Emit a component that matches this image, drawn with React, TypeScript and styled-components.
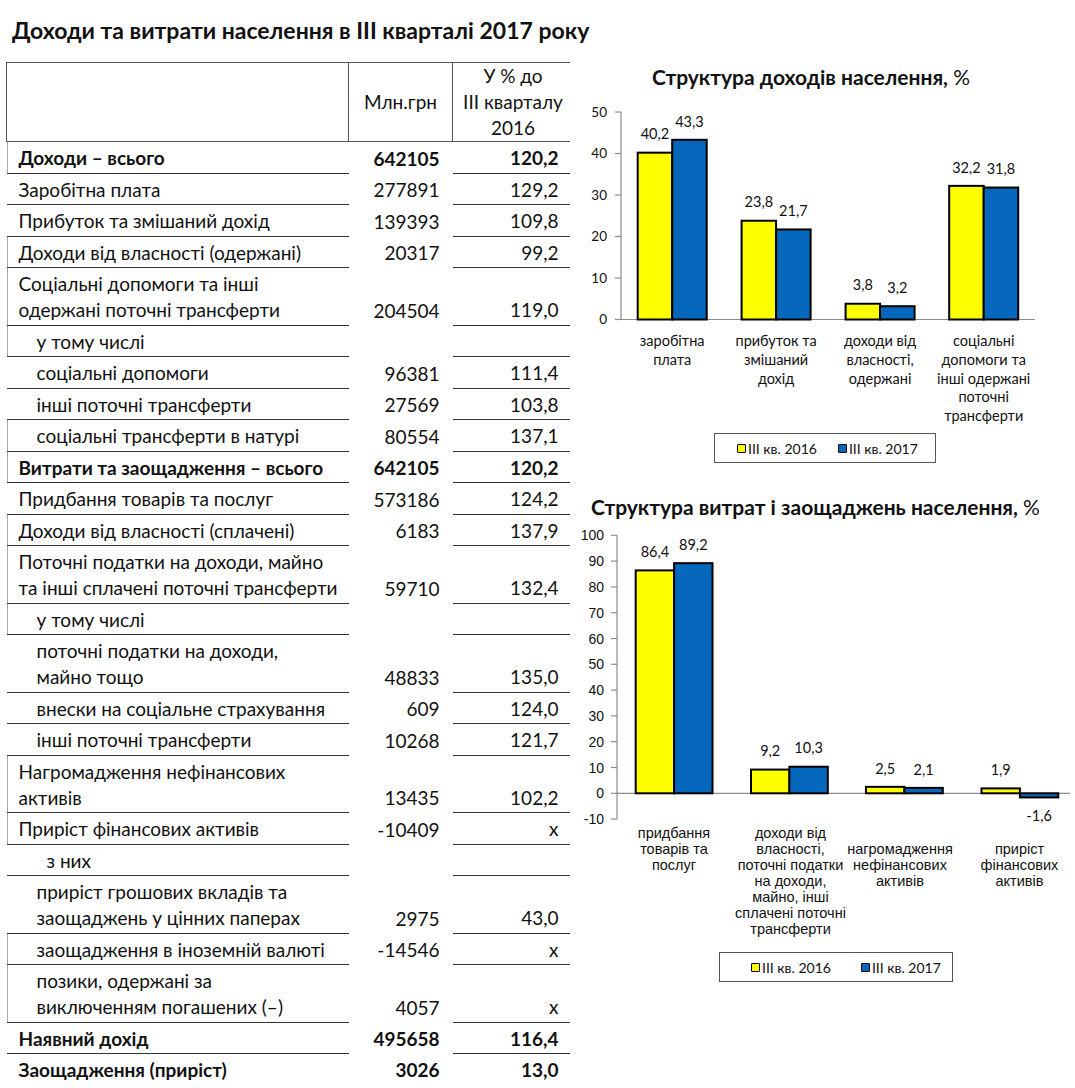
import React from "react";
import styled, { createGlobalStyle } from "styled-components";

const SANS = `Lato, "Open Sans", "Noto Sans", sans-serif`;
const ARIAL = `"Liberation Sans", Arial, sans-serif`;
const YELLOW = "#ffff00";
const BLUE = "#0568bd";
const INK = "#111";

const GlobalStyle = createGlobalStyle`
  html, body { margin: 0; padding: 0; background: #fff; }
  body { font-family: ${SANS}; color: ${INK}; }
`;

const Page = styled.div`
  width: 1075px;
  display: flex;
  flex-direction: column;
`;

const Title = styled.h1`
  margin: 0 0 20px 0;
  padding: 18px 0 0 12px;
  font-size: 23px;
  line-height: 24px;
  font-weight: 700;
  white-space: nowrap;
`;

const Body = styled.div`
  display: grid;
  grid-template-columns: 570px 505px;
  align-items: start;
`;

const TableWrap = styled.div`
  padding-left: 6px;
  overflow: hidden;
`;

const Table = styled.table`
  width: 564px;
  border-collapse: collapse;
  table-layout: fixed;
  font-size: 19px;
  line-height: 26px;
`;

const HeadCell = styled.th<{ $w: number }>`
  width: ${(p) => p.$w}px;
  height: 77px;
  padding: 0;
  border: 1.5px solid #555;
  font-weight: 400;
  text-align: center;
  vertical-align: middle;
`;

const LabelCell = styled.td<{ $indent: number; $bold?: boolean; $rule?: boolean; $open?: boolean }>`
  padding: 3px 0 1.5px ${(p) => 12 + p.$indent}px;
  white-space: nowrap;
  font-weight: ${(p) => (p.$bold ? 700 : 400)};
  border-bottom: ${(p) => (p.$open ? "none" : "1px solid #333")};
  box-shadow: ${(p) => (p.$rule ? "inset 1px 0 0 #a8a8a8" : "none")};
  vertical-align: bottom;
`;

const ValueCell = styled.td<{ $bold?: boolean }>`
  padding: 3px 13px 1.5px 0;
  text-align: right;
  font-weight: ${(p) => (p.$bold ? 700 : 400)};
  vertical-align: bottom;
`;

const PctCell = styled.td<{ $bold?: boolean; $open?: boolean }>`
  padding: 3px 15px 1.5px 0;
  text-align: right;
  font-weight: ${(p) => (p.$bold ? 700 : 400)};
  border-bottom: ${(p) => (p.$open ? "none" : "1px solid #333")};
  vertical-align: bottom;
`;

const Charts = styled.div`
  width: 505px;
  display: flex;
  flex-direction: column;
`;

const ChartBlock = styled.section<{ $top: number }>`
  margin-top: ${(p) => p.$top}px;
  display: flex;
  flex-direction: column;
`;

const ChartTitle = styled.h2<{ $indent: number; $gap: number }>`
  margin: 0 0 ${(p) => p.$gap}px 0;
  padding-left: ${(p) => p.$indent}px;
  font-size: 21px;
  line-height: 22px;
  font-weight: 700;
  white-space: nowrap;
`;

const Unit = styled.span`
  font-weight: 400;
`;

const Plot = styled.svg`
  display: block;
`;

const Legend = styled.div<{ $left: number; $width: number; $pad: number; $gap: number; $top: number }>`
  box-sizing: border-box;
  margin: ${(p) => p.$top}px 0 0 ${(p) => p.$left}px;
  width: ${(p) => p.$width}px;
  height: 30px;
  padding-left: ${(p) => p.$pad}px;
  border: 1px solid #555;
  display: flex;
  align-items: center;
  gap: ${(p) => p.$gap}px;
  font-size: 14px;
`;

const LegendItem = styled.span`
  display: flex;
  align-items: center;
  gap: 2px;
`;

const Swatch = styled.i<{ $color: string }>`
  display: inline-block;
  width: 7px;
  height: 7px;
  border: 1.5px solid #000;
  border-radius: 1px;
  background: ${(p) => p.$color};
`;

type Row = {
  label: string[];
  value?: string;
  pct?: string;
  indent?: number;
  bold?: boolean;
  rule?: boolean;
  open?: boolean;
};

const rows: Row[] = [
  { label: ["Доходи – всього"], value: "642105", pct: "120,2", bold: true, rule: true },
  { label: ["Заробітна плата"], value: "277891", pct: "129,2" },
  { label: ["Прибуток та змішаний дохід"], value: "139393", pct: "109,8" },
  { label: ["Доходи від власності (одержані)"], value: "20317", pct: "99,2", rule: true },
  { label: ["Соціальні допомоги та інші", "одержані поточні трансферти"], value: "204504", pct: "119,0", rule: true },
  { label: ["у тому числі"], indent: 18, rule: true },
  { label: ["соціальні допомоги"], value: "96381", pct: "111,4", indent: 18 },
  { label: ["інші поточні трансферти"], value: "27569", pct: "103,8", indent: 18 },
  { label: ["соціальні трансферти в натурі"], value: "80554", pct: "137,1", indent: 18, rule: true },
  { label: ["Витрати та заощадження – всього"], value: "642105", pct: "120,2", bold: true, rule: true },
  { label: ["Придбання товарів та послуг"], value: "573186", pct: "124,2" },
  { label: ["Доходи від власності (сплачені)"], value: "6183", pct: "137,9", rule: true },
  { label: ["Поточні податки на доходи, майно", "та інші сплачені поточні трансферти"], value: "59710", pct: "132,4", rule: true },
  { label: ["у тому числі"], indent: 18, rule: true },
  { label: ["поточні податки на доходи,", "майно тощо"], value: "48833", pct: "135,0", indent: 18 },
  { label: ["внески на соціальне страхування"], value: "609", pct: "124,0", indent: 18 },
  { label: ["інші поточні трансферти"], value: "10268", pct: "121,7", indent: 18 },
  { label: ["Нагромадження нефінансових", "активів"], value: "13435", pct: "102,2", rule: true },
  { label: ["Приріст фінансових активів"], value: "-10409", pct: "x", rule: true },
  { label: ["з них"], indent: 28 },
  { label: ["приріст грошових вкладів та", "заощаджень у цінних паперах"], value: "2975", pct: "43,0", indent: 18 },
  { label: ["заощадження в іноземній валюті"], value: "-14546", pct: "x", indent: 18, rule: true },
  { label: ["позики, одержані за", "виключенням погашених (–)"], value: "4057", pct: "x", indent: 18, rule: true },
  { label: ["Наявний дохід"], value: "495658", pct: "116,4", bold: true },
  { label: ["Заощадження (приріст)"], value: "3026", pct: "13,0", bold: true, open: true },
];

type Group = { x: number; values: [number, number]; labels: string[]; labelX: number; firstLine: number };

type ChartSpec = {
  width: number;
  height: number;
  axisX: number;
  zeroY: number;
  unit: number;
  min: number;
  max: number;
  step: number;
  tickLabelX: number;
  tickFont: string;
  tickSize: number;
  baselineEnd: number;
  barW: number;
  valueGap: number;
  catTop: number;
  catStep: number;
  catFont: string;
  catSize: number;
  groups: Group[];
};

const fmt = (v: number) => String(v).replace(".", ",");

function BarChart({ spec }: { spec: ChartSpec }) {
  const y = (v: number) => spec.zeroY - v * spec.unit;
  const ticks: number[] = [];
  for (let t = spec.min; t <= spec.max; t += spec.step) ticks.push(t);
  return (
    <Plot width={spec.width} height={spec.height} viewBox={`0 0 ${spec.width} ${spec.height}`}>
      <line x1={spec.axisX} x2={spec.axisX} y1={y(spec.max)} y2={y(spec.min)} stroke="#8c8c8c" strokeWidth={1.2} />
      {ticks.map((t) => (
        <g key={t}>
          <line x1={spec.axisX - 6} x2={spec.axisX} y1={y(t)} y2={y(t)} stroke="#8c8c8c" strokeWidth={1.2} />
          <text
            x={spec.tickLabelX}
            y={y(t)}
            dy="0.36em"
            textAnchor="end"
            fontFamily={spec.tickFont}
            fontSize={spec.tickSize}
            fill={INK}
          >
            {t}
          </text>
        </g>
      ))}
      <line x1={spec.axisX} x2={spec.baselineEnd} y1={spec.zeroY} y2={spec.zeroY} stroke="#8c8c8c" strokeWidth={1.2} />
      {spec.groups.map((g, gi) => (
        <g key={gi}>
          {g.values.map((v, vi) => {
            const bx = g.x + vi * spec.barW;
            const top = Math.min(y(v), spec.zeroY);
            const h = Math.abs(v) * spec.unit;
            const cx = bx + spec.barW / 2;
            const ly = v >= 0 ? y(v) - spec.valueGap : y(v) + spec.valueGap;
            return (
              <g key={vi}>
                <rect
                  x={bx}
                  y={top}
                  width={spec.barW}
                  height={h}
                  fill={vi === 0 ? YELLOW : BLUE}
                  stroke="#000"
                  strokeWidth={2}
                />
                <text x={cx} y={ly} dy="0.36em" textAnchor="middle" fontFamily={SANS} fontSize={14.5} fill={INK}>
                  {fmt(v)}
                </text>
              </g>
            );
          })}
          <text textAnchor="middle" fontFamily={spec.catFont} fontSize={spec.catSize} fill={INK}>
            {g.labels.map((l, li) => (
              <tspan key={li} x={g.labelX} y={spec.catTop + (g.firstLine + li) * spec.catStep} dy="0.36em">
                {l}
              </tspan>
            ))}
          </text>
        </g>
      ))}
    </Plot>
  );
}

const incomeSpec: ChartSpec = {
  width: 505,
  height: 330,
  axisX: 51,
  zeroY: 219.5,
  unit: 4.15,
  min: 0,
  max: 50,
  step: 10,
  tickLabelX: 37,
  tickFont: SANS,
  tickSize: 13.5,
  baselineEnd: 465,
  barW: 34.5,
  valueGap: 18.5,
  catTop: 241,
  catStep: 18.7,
  catFont: SANS,
  catSize: 14.5,
  groups: [
    { x: 67.7, values: [40.2, 43.3], labels: ["заробітна", "плата"], labelX: 102.2, firstLine: 0 },
    { x: 171.6, values: [23.8, 21.7], labels: ["прибуток та", "змішаний", "дохід"], labelX: 206.1, firstLine: 0 },
    { x: 275.6, values: [3.8, 3.2], labels: ["доходи від", "власності,", "одержані"], labelX: 310.1, firstLine: 0 },
    {
      x: 379.2,
      values: [32.2, 31.8],
      labels: ["соціальні", "допомоги та", "інші одержані", "поточні", "трансферти"],
      labelX: 413.7,
      firstLine: 0,
    },
  ],
};

const spendSpec: ChartSpec = {
  width: 505,
  height: 425,
  axisX: 47,
  zeroY: 268.3,
  unit: 2.58,
  min: -10,
  max: 100,
  step: 10,
  tickLabelX: 34,
  tickFont: ARIAL,
  tickSize: 14,
  baselineEnd: 500,
  barW: 38.4,
  valueGap: 18.5,
  catTop: 307.7,
  catStep: 16,
  catFont: ARIAL,
  catSize: 14.5,
  groups: [
    { x: 65.7, values: [86.4, 89.2], labels: ["придбання", "товарів та", "послуг"], labelX: 104, firstLine: 0 },
    {
      x: 181,
      values: [9.2, 10.3],
      labels: ["доходи від", "власності,", "поточні податки", "на доходи,", "майно, інші", "сплачені поточні", "трансферти"],
      labelX: 220.5,
      firstLine: 0,
    },
    { x: 296, values: [2.5, 2.1], labels: ["нагромадження", "нефінансових", "активів"], labelX: 330, firstLine: 1 },
    { x: 411.5, values: [1.9, -1.6], labels: ["приріст", "фінансових", "активів"], labelX: 449.5, firstLine: 1 },
  ],
};

function ChartLegend(props: { left: number; width: number; pad: number; gap: number; top: number }) {
  return (
    <Legend $left={props.left} $width={props.width} $pad={props.pad} $gap={props.gap} $top={props.top}>
      <LegendItem>
        <Swatch $color={YELLOW} />
        III кв. 2016
      </LegendItem>
      <LegendItem>
        <Swatch $color={BLUE} />
        III кв. 2017
      </LegendItem>
    </Legend>
  );
}

export default function App() {
  return (
    <Page>
      <GlobalStyle />
      <Title>Доходи та витрати населення в III кварталі 2017 року</Title>
      <Body>
        <TableWrap>
          <Table>
            <thead>
              <tr>
                <HeadCell $w={341} />
                <HeadCell $w={103}>Млн.грн</HeadCell>
                <HeadCell $w={120}>
                  У % до
                  <br />
                  III кварталу
                  <br />
                  2016
                </HeadCell>
              </tr>
            </thead>
            <tbody>
              {rows.map((r, i) => (
                <tr key={i}>
                  <LabelCell $indent={r.indent ?? 0} $bold={r.bold} $rule={r.rule} $open={r.open}>
                    {r.label.map((l, li) => (
                      <React.Fragment key={li}>
                        {li > 0 && <br />}
                        {l}
                      </React.Fragment>
                    ))}
                  </LabelCell>
                  <ValueCell $bold={r.bold}>{r.value}</ValueCell>
                  <PctCell $bold={r.bold} $open={r.open}>
                    {r.pct}
                  </PctCell>
                </tr>
              ))}
            </tbody>
          </Table>
        </TableWrap>
        <Charts>
          <ChartBlock $top={4}>
            <ChartTitle $indent={82} $gap={12}>
              Структура доходів населення, <Unit>%</Unit>
            </ChartTitle>
            <BarChart spec={incomeSpec} />
            <ChartLegend left={144} width={222} pad={22} gap={21} top={3} />
          </ChartBlock>
          <ChartBlock $top={33}>
            <ChartTitle $indent={21} $gap={7}>
              Структура витрат і заощаджень населення, <Unit>%</Unit>
            </ChartTitle>
            <BarChart spec={spendSpec} />
            <ChartLegend left={149} width={234} pad={31} gap={30} top={2} />
          </ChartBlock>
        </Charts>
      </Body>
    </Page>
  );
}
